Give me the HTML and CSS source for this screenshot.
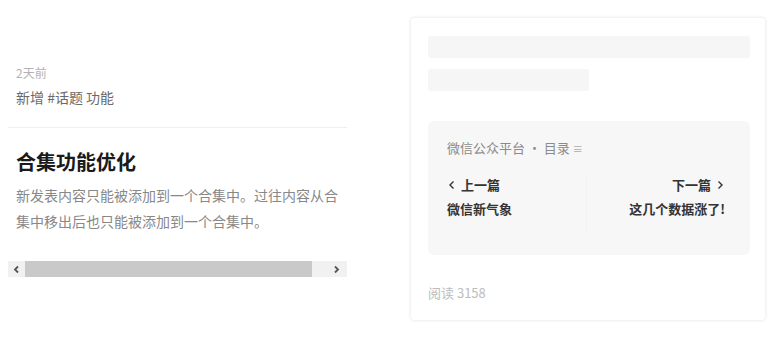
FILE: index.html
```html
<!DOCTYPE html>
<html lang="zh">
<head>
<meta charset="utf-8">
<link rel="stylesheet" href="styles.css">
</head>
<body>
<div class="page">
  <div class="left">
    <div class="meta">
      <div class="time">2天前</div>
      <div class="tags">新增 #话题 功能</div>
    </div>
    <div class="divider"></div>
    <div class="post">
      <h1 class="title">合集功能优化</h1>
      <p class="desc">新发表内容只能被添加到一个合集中。过往内容从合集中移出后也只能被添加到一个合集中。</p>
    </div>
    <div class="scrollbar">
      <span class="sb-btn sb-left"><svg width="9" height="9" viewBox="0 0 9 9"><path d="M6 1.5 L3 4.5 L6 7.5" fill="none" stroke="#555" stroke-width="1.8"/></svg></span>
      <span class="sb-thumb"></span>
      <span class="sb-btn sb-right"><svg width="9" height="9" viewBox="0 0 9 9"><path d="M3 1.5 L6 4.5 L3 7.5" fill="none" stroke="#555" stroke-width="1.8"/></svg></span>
    </div>
  </div>
  <div class="card">
    <div class="skel skel-long"></div>
    <div class="skel skel-short"></div>
    <div class="album">
      <div class="album-head">微信公众平台 · 目录 <span class="menu">≡</span></div>
      <div class="album-nav">
        <div class="nav-item prev">
          <div class="nav-label"><svg width="10" height="10" viewBox="0 0 10 10"><path d="M6.5 1.5 L3 5 L6.5 8.5" fill="none" stroke="#333" stroke-width="1.4"/></svg>上一篇</div>
          <div class="nav-title">微信新气象</div>
        </div>
        <div class="nav-sep"></div>
        <div class="nav-item next">
          <div class="nav-label">下一篇<svg width="10" height="10" viewBox="0 0 10 10"><path d="M3.5 1.5 L7 5 L3.5 8.5" fill="none" stroke="#333" stroke-width="1.4"/></svg></div>
          <div class="nav-title">这几个数据涨了!</div>
        </div>
      </div>
    </div>
    <div class="reads">阅读 3158</div>
  </div>
</div>
</body>
</html>
```
FILE: styles.css
```css
html, body {
  margin: 0;
  padding: 0;
  background: #fff;
}
body {
  font-family: "Noto Sans CJK SC", "Noto Sans", sans-serif;
  width: 776px;
  height: 337px;
  overflow: hidden;
}
.page {
  display: flex;
  align-items: flex-start;
  padding: 17px 9px 0 8px;
}
.left {
  width: 339px;
  padding-top: 47px;
}
.meta {
  padding-left: 8px;
}
.time {
  font-size: 12px;
  line-height: 17px;
  color: #b2b2b2;
}
.tags {
  margin-top: 6px;
  font-size: 14px;
  line-height: 20px;
  color: #6a6a6a;
}
.divider {
  margin-top: 20px;
  height: 1px;
  background: #efefef;
}
.post {
  padding-left: 8px;
}
.title {
  margin: 20px 0 0;
  font-size: 20px;
  line-height: 28px;
  font-weight: 700;
  color: #1a1a1a;
}
.desc {
  margin: 6px 0 0;
  font-size: 14px;
  line-height: 26px;
  color: #888;
}
.scrollbar {
  margin-top: 27px;
  height: 16px;
  display: flex;
  background: #f1f1f1;
}
.sb-btn {
  width: 17px;
  display: flex;
  align-items: center;
  justify-content: center;
}
.sb-right {
  width: 22px;
  margin-left: auto;
}
.sb-thumb {
  width: 287px;
  background: #c9c9c9;
}
.card {
  margin-left: 63px;
  width: 322px;
  height: 284px;
  padding: 18px 15px 0 17px;
  border-radius: 4px;
  box-shadow: 0 0 3px rgba(0,0,0,0.07);
  border: 1px solid #f3f3f3;
}
.skel {
  background: #f6f6f6;
  border-radius: 3px;
  height: 22px;
}
.skel-short {
  margin-top: 11px;
  width: 161px;
}
.album {
  margin-top: 30px;
  background: #f7f7f7;
  border-radius: 6px;
  height: 134px;
  padding: 0 25px 0 19px;
  box-sizing: border-box;
}
.album-head {
  padding-top: 18px;
  font-size: 13px;
  line-height: 18px;
  color: #8a8a8a;
}
.menu {
  font-size: 10px;
  color: #aaa;
}
.album-nav {
  display: flex;
  margin-top: 17px;
}
.nav-item {
  flex: 1;
  font-size: 13px;
  font-weight: 700;
  color: #333;
}
.nav-label {
  display: flex;
  align-items: center;
  gap: 4px;
  line-height: 20px;
}
.nav-title {
  margin-top: 4px;
  line-height: 20px;
}
.next {
  text-align: right;
}
.next .nav-label {
  justify-content: flex-end;
}
.nav-sep {
  width: 1px;
  height: 58px;
  background: #f1f1f1;
}
.reads {
  margin-top: 29px;
  font-size: 13px;
  line-height: 18px;
  color: #bdbdbd;
}
```
